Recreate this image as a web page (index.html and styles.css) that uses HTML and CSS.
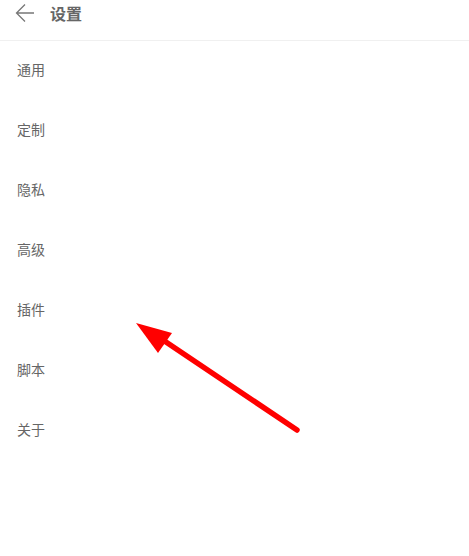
FILE: index.html
```html
<!DOCTYPE html>
<html>
<head>
<meta charset="utf-8">
<title>设置</title>
<link rel="stylesheet" href="styles.css">
</head>
<body>
<div class="header">
<svg class="back" width="20" height="20" viewBox="0 0 20 20"><path d="M19 10H1.5M10 1.5L1.5 10l8.5 8.5" fill="none" stroke="#777" stroke-width="1.3"/></svg>
<div class="title">设置</div>
</div>
<div class="menu">
<div class="item">通用</div>
<div class="item">定制</div>
<div class="item">隐私</div>
<div class="item">高级</div>
<div class="item">插件</div>
<div class="item">脚本</div>
<div class="item">关于</div>
</div>
<svg class="pointer" width="469" height="556" viewBox="0 0 469 556">
<line x1="297" y1="430" x2="160" y2="338" stroke="#f00" stroke-width="5.5" stroke-linecap="round"/>
<polygon points="136,323 172,333 158,353" fill="#f00"/>
</svg>
</body>
</html>
```
FILE: styles.css
```css
body {
margin: 0;
font-family: "Noto Sans CJK SC", "Noto Sans", sans-serif;
background: #fff;
color: #666;
}
.header {
display: flex;
align-items: center;
height: 24px;
padding: 1px 16px 15px 15px;
border-bottom: 1px solid #f0f0f0;
}
.back {
margin-right: 15px;
}
.title {
font-size: 16px;
font-weight: bold;
color: #666;
}
.menu {
margin-top: -2px;
}
.item {
height: 60px;
line-height: 60px;
padding-left: 17px;
font-size: 14px;
color: #666;
}
.pointer {
position: absolute;
left: 0;
top: 0;
}
```
